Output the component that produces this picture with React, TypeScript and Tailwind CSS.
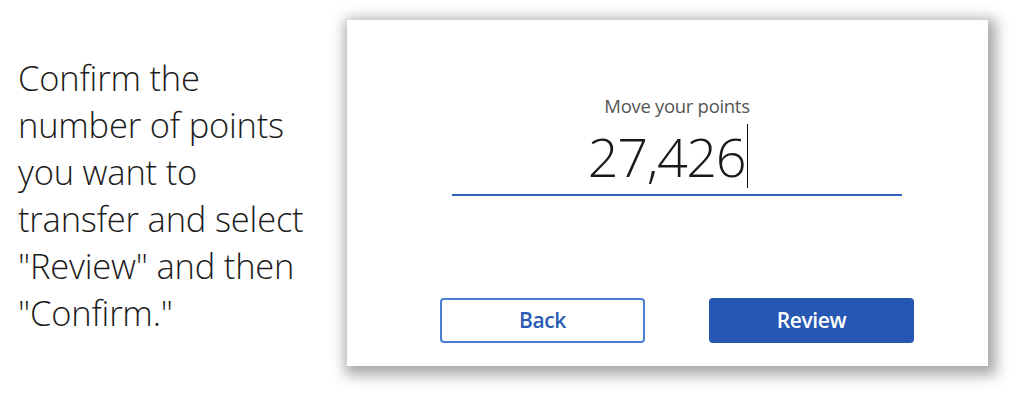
export default function App() {
  return (
    <div className="w-[1024px] h-[406px] bg-white flex items-start font-['Open_Sans',sans-serif]">
      <div className="w-[347px] pl-[18px] pt-[54px] shrink-0">
        <p className="text-[34.5px] leading-[47px] font-light text-[#1c1c1c] tracking-[-0.2px]">
          Confirm the
          <br />
          number of points
          <br />
          you want to
          <br />
          transfer and select
          <br />
          "Review" and then
          <br />
          "Confirm."
        </p>
      </div>

      <div className="mt-[20px] w-[641px] h-[346px] bg-white shadow-[3px_4px_13px_5px_rgba(0,0,0,0.35)] pl-[93px] pr-[74px] pt-[75px] shrink-0">
        <div className="w-[474px] flex flex-col">
          <div className="mx-[12px] border-b-2 border-[#2f63bd] flex flex-col items-center">
            <span className="text-[18.5px] leading-[22px] text-[#555] tracking-[-0.3px]">Move your points</span>
            <div className="flex items-center h-[77px] pr-[18px]">
              <span className="text-[54px] leading-none font-light text-[#1a1a1a] tracking-[-1.4px]">27,426</span>
              <span className="w-px h-[64px] bg-[#111] ml-[2px]" />
            </div>
          </div>

          <div className="flex justify-between mt-[102px]">
            <button className="w-[205px] h-[45px] rounded-[4px] border-2 border-[#4a7fd6] bg-white text-[#2a5cb4] text-[21px] font-semibold tracking-[-0.4px]">
              Back
            </button>
            <button className="w-[205px] h-[45px] rounded-[4px] bg-[#2658b3] text-white text-[21px] font-semibold tracking-[-0.4px]">
              Review
            </button>
          </div>
        </div>
      </div>
    </div>
  );
}
